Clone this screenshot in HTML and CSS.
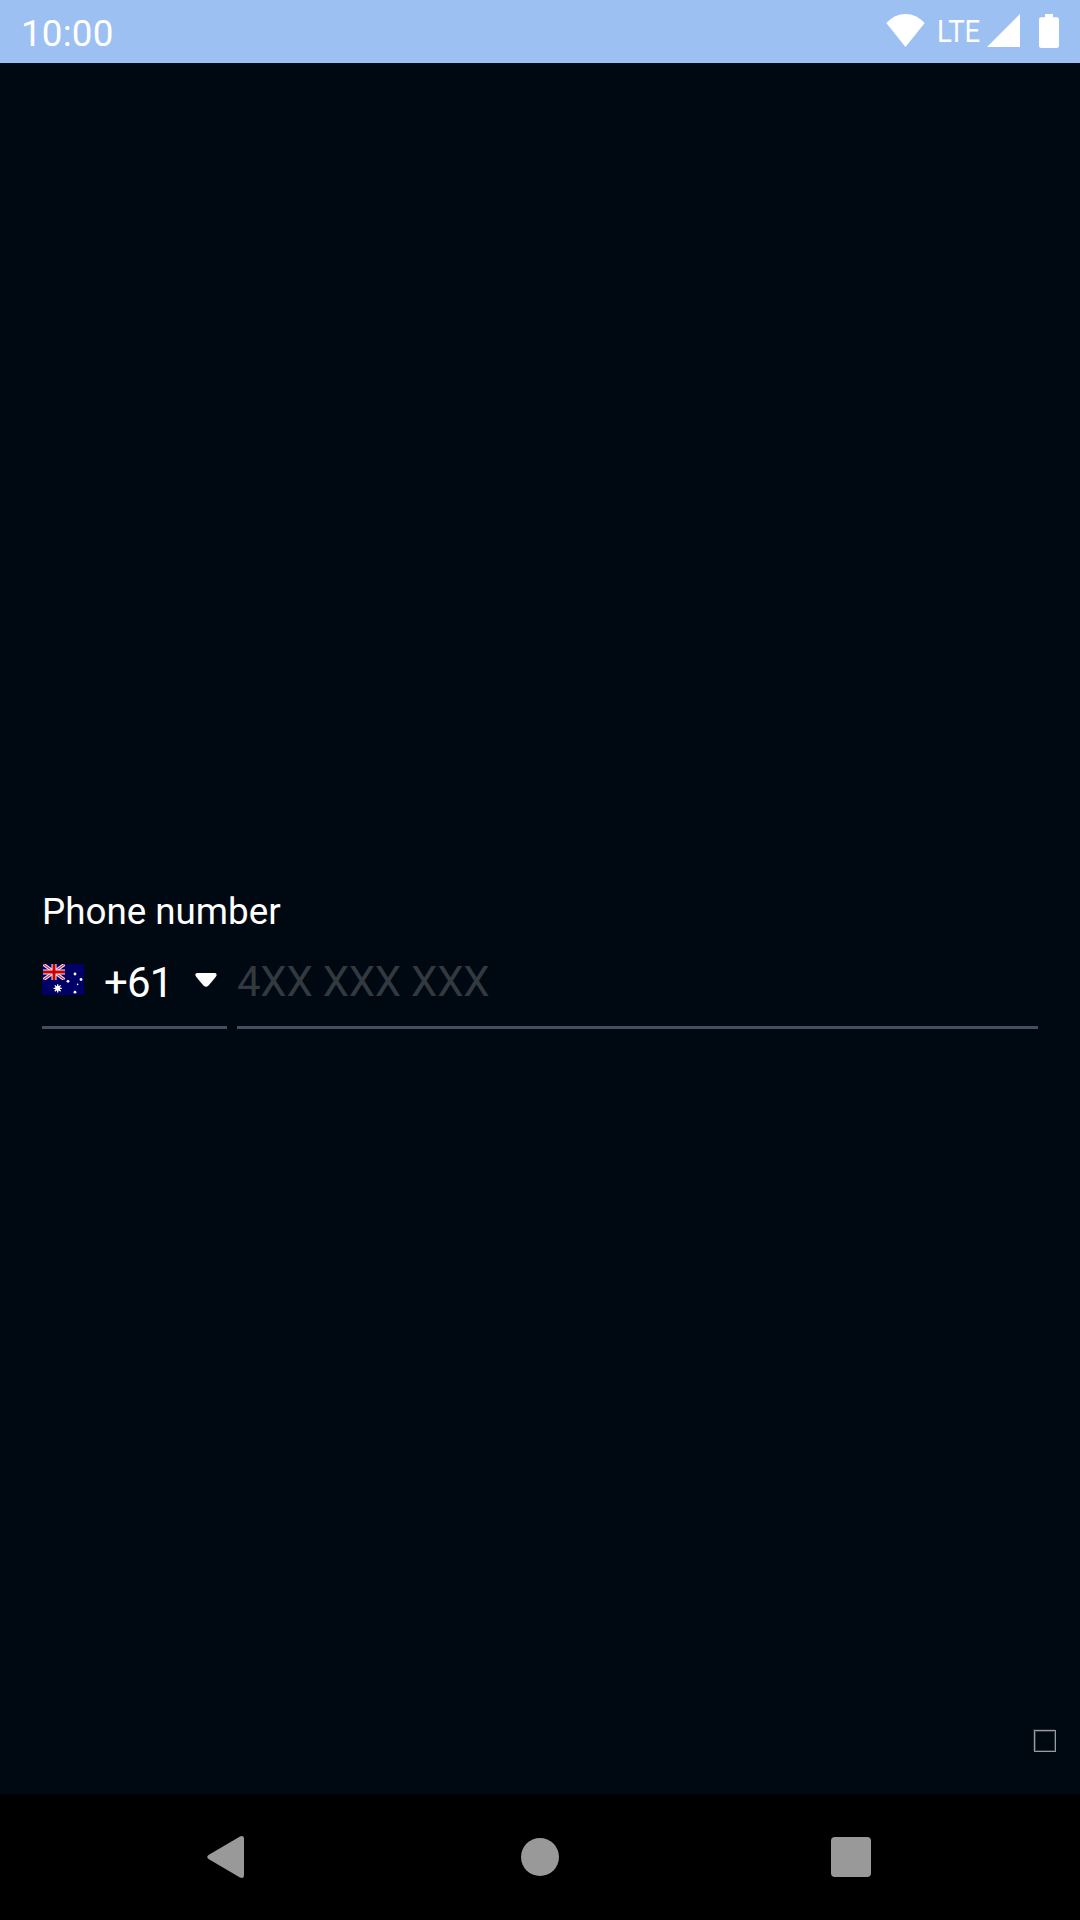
FILE: index.html
```html
<!DOCTYPE html>
<html lang="en">
<head>
<meta charset="utf-8">
<title>Phone number</title>
<link rel="stylesheet" href="styles.css">
</head>
<body>
<header class="status">
  <span class="time">10:00</span>
  <div class="indicators">
    <svg class="wifi" width="39" height="33" viewBox="0 0 40 33" preserveAspectRatio="none"><path d="M20 33 0.3 9Q9 0 20 0T39.7 9Z"/></svg>
    <span class="network">LTE</span>
    <svg class="signal" width="33" height="33" viewBox="0 0 33 33"><path d="M33 0V33H0Z"/></svg>
    <svg class="battery" width="20" height="34" viewBox="0 0 20 34"><path d="M6 0h8v3.300h3.700Q20 3.300 20 5.600V31.700Q20 34 17.700 34H2.300Q0 34 0 31.700V5.600Q0 3.300 2.300 3.300H6Z"/></svg>
  </div>
</header>
<main class="screen">
  <form class="phone">
    <label class="label" for="number">Phone number</label>
    <div class="fields">
      <div class="country">
        <svg class="flag" width="42" height="31" viewBox="0 0 42 31">
          <path fill="#006" d="M0 0h42v31H0z"/>
          <svg x="1" y="0" width="22" height="16" viewBox="0 0 22 16">
            <path stroke="#eef" stroke-width="3.200" d="M0 0 22 16M22 0 0 16"/>
            <path stroke="#d8304a" stroke-width="1.300" d="M0 0 22 16M22 0 0 16"/>
            <path stroke="#eef" stroke-width="5" d="M11 0v16M0 8h22"/>
            <path stroke="#d00000" stroke-width="3" d="M11 0v16M0 8h22"/>
          </svg>
          <circle cx="15.700" cy="24.300" r="2.500" fill="#fff"/>
          <path stroke="#fff" stroke-width="1.300" d="M15.700 20.200v8.200M11.600 24.300h8.200M12.800 21.400l5.800 5.800M18.600 21.400l-5.800 5.800"/>
          <g fill="#fff"><circle cx="33" cy="10" r="1.400"/><circle cx="26" cy="17.300" r="1.400"/><circle cx="39" cy="15.500" r="1.400"/><circle cx="33" cy="28.200" r="1.400"/><circle cx="35.600" cy="20.400" r=".8"/></g>
        </svg>
        <span class="code">+61</span>
        <svg class="caret" width="22" height="14" viewBox="0 0 22 14"><path d="M2 0H20Q22 .3 21.500 2.500 21 4 13.500 12.500 11 15 8.500 12.500 1 4 .5 2.500 0 .3 2 0Z"/></svg>
      </div>
      <input class="number" id="number" type="tel" placeholder="4XX XXX XXX">
    </div>
  </form>
  <div class="missing"></div>
</main>
<nav class="nav">
  <svg width="38" height="42" viewBox="0 0 38 42"><path d="M1.500 19 33 .5Q37 -1 37 3V39Q37 43 33 41.500L1.500 23Q-1 21 1.500 19Z"/></svg>
  <svg class="home" width="38" height="38" viewBox="0 0 38 38"><circle cx="19" cy="19" r="19"/></svg>
  <svg width="40" height="40" viewBox="0 0 40 40"><rect width="40" height="40" rx="4"/></svg>
</nav>
</body>
</html>
```
FILE: styles.css
```css
* { box-sizing: border-box; }
body {
  margin: 0;
  width: 1080px;
  height: 1920px;
  display: flex;
  flex-direction: column;
  overflow: hidden;
  background: #000812;
  color: #fff;
  font-family: Roboto, sans-serif;
}
svg { display: block; flex: none; }
.status {
  height: 63px;
  flex: none;
  display: flex;
  justify-content: space-between;
  padding: 0 21px;
  background: #9dc0f3;
  fill: #fff;
}
.time { font-size: 36.75px; line-height: 43px; padding-top: 12px; letter-spacing: .2px; }
.indicators { display: flex; align-items: flex-start; padding-top: 14px; }
.network {
  width: 43px;
  margin: -2px 7px 0 12px;
  font-size: 32px;
  line-height: 38px;
  transform: scaleX(.86);
  transform-origin: left;
}
.battery { margin-left: 19px; }
.screen {
  flex: 1;
  display: flex;
  flex-direction: column;
  justify-content: space-between;
  padding: 827px 24px 42px 42px;
}
.phone { width: 996px; }
.label { display: block; font-size: 36.75px; line-height: 44px; }
.fields { display: flex; gap: 10px; margin-top: 7px; }
.country {
  width: 185px;
  height: 88px;
  display: flex;
  align-items: flex-start;
  border-bottom: 3px solid #434e5e;
  fill: #fff;
}
.flag { margin-top: 23px; }
.code { width: 69px; margin: 17px 22px 0 20px; font-size: 42px; line-height: 50px; letter-spacing: -.8px; }
.caret { margin-top: 32px; }
.number {
  flex: 1;
  min-width: 0;
  height: 88px;
  padding: 0 0 5px;
  border: 0;
  border-bottom: 3px solid #434e5e;
  border-radius: 0;
  outline: 0;
  background: none;
  color: #fff;
  font: 42px Roboto, sans-serif;
  letter-spacing: -.25px;
}
.number::placeholder { color: #32393f; opacity: 1; }
.missing { width: 22px; height: 22px; align-self: flex-end; border: 1px solid #999b9e; box-shadow: -1px -1px 0 #20252b, inset 0 0 0 1px #32373d; }
.nav {
  height: 126px;
  flex: none;
  display: flex;
  justify-content: space-between;
  align-items: center;
  padding: 0 209px 0 207px;
  background: #000;
  fill: #999;
}
.home { margin-left: 4px; }
```
